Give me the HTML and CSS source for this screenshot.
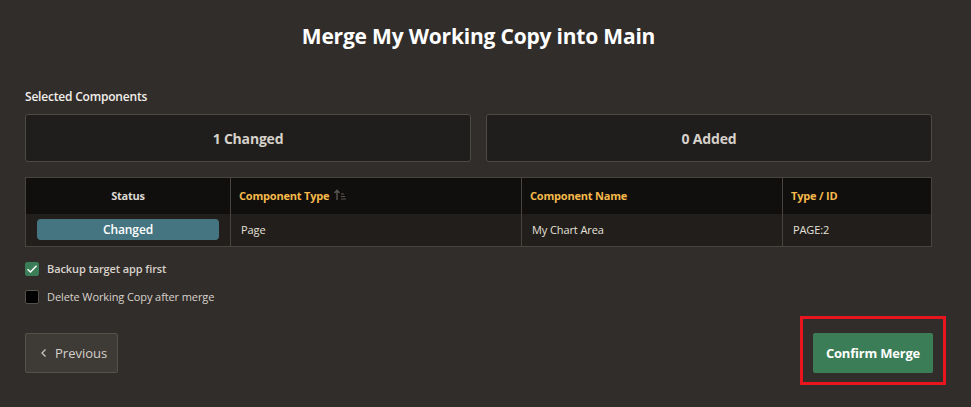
FILE: index.html
```html
<!DOCTYPE html>
<html>
<head>
<meta charset="utf-8">
<link rel="stylesheet" href="styles.css">
</head>
<body>
<div class="page">
  <h1 class="title">Merge My Working Copy into Main</h1>
  <div class="section-label">Selected Components</div>
  <div class="cards">
    <div class="card">1 Changed</div>
    <div class="card">0 Added</div>
  </div>
  <table class="grid">
    <colgroup>
      <col class="c1"><col class="c2"><col class="c3"><col class="c4">
    </colgroup>
    <thead>
      <tr>
        <th class="center plain">Status</th>
        <th>Component Type <svg class="sort" width="14" height="12" viewBox="0 0 14 12"><path d="M4 11V1.5M1.5 4L4 1.2L6.5 4" fill="none" stroke="#5a5550" stroke-width="1.4"/><path d="M8 5h3M8 7.5h4M8 10h5" stroke="#5a5550" stroke-width="1"/></svg></th>
        <th>Component Name</th>
        <th>Type / ID</th>
      </tr>
    </thead>
    <tbody>
      <tr>
        <td class="badge-cell"><span class="badge">Changed</span></td>
        <td>Page</td>
        <td>My Chart Area</td>
        <td>PAGE:2</td>
      </tr>
    </tbody>
  </table>
  <div class="checks">
    <label class="check"><span class="box on"><svg width="12" height="10" viewBox="0 0 12 10"><path d="M1.5 5.2L4.5 8L10.5 1.8" fill="none" stroke="#fff" stroke-width="1.5"/></svg></span><span class="check-label strong">Backup target app first</span></label>
    <label class="check"><span class="box"></span><span class="check-label">Delete Working Copy after merge</span></label>
  </div>
  <div class="actions">
    <button class="btn prev"><svg width="8" height="10" viewBox="0 0 8 10"><path d="M5.5 1.5L2 5l3.5 3.5" fill="none" stroke="#c9c4bd" stroke-width="1.3"/></svg><span>Previous</span></button>
    <div class="highlight">
      <button class="btn confirm">Confirm Merge</button>
    </div>
  </div>
</div>
</body>
</html>
```

FILE: styles.css
```css
* { box-sizing: border-box; }
html, body {
  margin: 0;
  background: #312d2a;
  height: 100%;
}
body {
  font-family: "Open Sans", "Noto Sans", sans-serif;
  color: #f2efeb;
}
.page {
  padding: 20px 39px 0 25px;
}
.title {
  margin: 0;
  text-align: center;
  font-size: 21px;
  font-weight: 700;
  letter-spacing: -0.2px;
  line-height: 32px;
  color: #ffffff;
}
.section-label {
  margin-top: 37px;
  font-size: 12px;
  font-weight: 600;
  color: #f2efeb;
  line-height: 16px;
  letter-spacing: -0.2px;
}
.cards {
  margin-top: 9px;
  display: grid;
  grid-template-columns: 1fr 1fr;
  gap: 15px;
}
.card {
  height: 48px;
  background: #201e1c;
  border: 1px solid #4e4a45;
  border-radius: 3px;
  display: flex;
  align-items: center;
  justify-content: center;
  font-size: 14px;
  font-weight: 700;
  color: #d6d1ca;
  letter-spacing: -0.2px;
}
.grid {
  margin-top: 15px;
  width: 100%;
  border-collapse: collapse;
  border: 1px solid #48443f;
  table-layout: fixed;
}
.c1 { width: 205px; }
.c2 { width: 291px; }
.c3 { width: 261px; }
.c4 { width: auto; }
.grid th {
  background: #100f0e;
  height: 36px;
  text-align: left;
  padding: 0 8px;
  font-size: 11px;
  font-weight: 700;
  color: #f6b94a;
  border-left: 1px solid #48443f;
  letter-spacing: -0.2px;
  white-space: nowrap;
}
.grid th.center { text-align: center; }
.grid th.plain { color: #dcd8d2; }
.sort { vertical-align: -1px; margin-left: 1px; }
.grid td {
  background: #211e1c;
  height: 33px;
  padding: 0 10px;
  font-size: 11px;
  color: #e6e1da;
  border-left: 1px solid #48443f;
  letter-spacing: -0.1px;
}
.grid td.badge-cell { padding: 0 11px; }
.badge {
  display: flex;
  align-items: center;
  justify-content: center;
  height: 21px;
  background: #467582;
  border-radius: 4px;
  font-size: 12px;
  font-weight: 600;
  color: #ffffff;
}
.checks {
  margin-top: 14px;
  display: flex;
  flex-direction: column;
  gap: 13px;
}
.check {
  display: flex;
  align-items: center;
  gap: 8px;
  height: 15px;
}
.box {
  width: 14px;
  height: 14px;
  border-radius: 2px;
  background: #000;
  border: 1px solid #55504a;
  display: flex;
  align-items: center;
  justify-content: center;
}
.box.on {
  background: #3a7d56;
  border-color: #3a7d56;
}
.check-label {
  font-size: 11px;
  color: #d8d3cc;
  letter-spacing: -0.1px;
}
.check-label.strong { font-weight: 600; }
.actions {
  margin-top: 12px;
  display: flex;
  justify-content: space-between;
  align-items: flex-start;
}
.btn {
  font-family: inherit;
  cursor: pointer;
  border-radius: 2px;
}
.prev {
  margin-top: 17px;
  height: 40px;
  width: 93px;
  background: #3e3a36;
  border: 1px solid #55504a;
  color: #d6d1ca;
  font-size: 13px;
  display: flex;
  align-items: center;
  gap: 7px;
  padding: 0 0 0 14px;
}
.highlight {
  margin-right: -14px;
  border: 3px solid #e8151f;
  padding: 14px 10px 9px 10px;
}
.confirm {
  display: block;
  height: 40px;
  width: 120px;
  background: #3a7d56;
  border: none;
  color: #ffffff;
  font-size: 13px;
  font-weight: 700;
  letter-spacing: -0.2px;
}
```
